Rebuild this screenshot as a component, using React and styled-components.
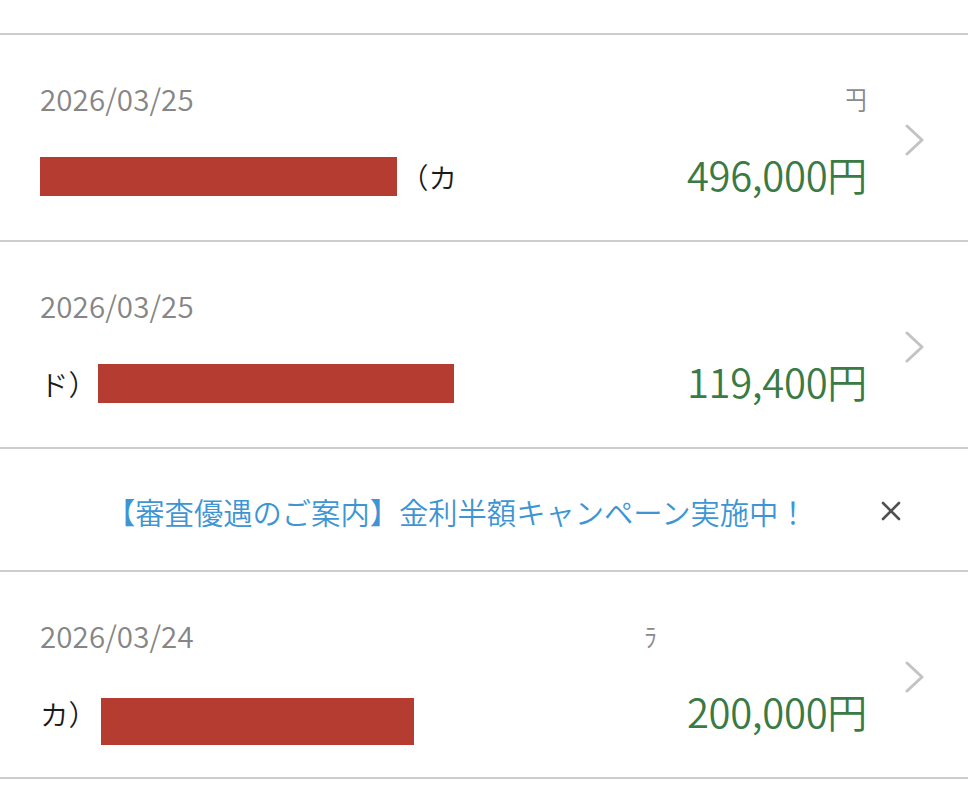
import React from 'react';
import styled, { createGlobalStyle } from 'styled-components';

const Global = createGlobalStyle`
  html, body {
    margin: 0;
    padding: 0;
    background: #fff;
  }
  body {
    font-family: "Noto Sans CJK JP", "Noto Sans", sans-serif;
    font-weight: 350;
    -webkit-font-smoothing: antialiased;
  }
`;

const Page = styled.div`
  width: 968px;
  padding-top: 33px;
`;

const List = styled.div`
  border-top: 2px solid #cdcdcd;
`;

const Row = styled.div`
  box-sizing: border-box;
  height: 207px;
  display: flex;
  align-items: center;
  padding: 0 43px 0 40px;
  border-bottom: 2px solid #cdcdcd;
`;

const Body = styled.div`
  flex: 1;
  align-self: stretch;
  padding-top: 45px;
  display: flex;
  flex-direction: column;
`;

const DateLine = styled.div`
  height: 36px;
  display: flex;
  align-items: center;
  justify-content: space-between;
`;

const DateText = styled.span`
  font-size: 29.5px;
  color: #868686;
  letter-spacing: 0.1px;
`;

const Ghost = styled.span`
  font-size: 26px;
  color: #8a8a8a;
  margin-right: ${(p) => p.$offset || 0}px;
  clip-path: inset(0 0 0 ${(p) => p.$cut || 0}%);
`;

const NameLine = styled.div`
  margin-top: 35px;
  height: 50px;
  display: flex;
  align-items: center;
  justify-content: space-between;
`;

const Name = styled.div`
  display: flex;
  align-items: center;
  gap: ${(p) => p.$gap || 4}px;
  font-size: 28.5px;
  color: #1a1a1a;
`;

const Redact = styled.span`
  display: inline-block;
  width: ${(p) => p.$w}px;
  height: ${(p) => p.$h}px;
  background: #b53c30;
  transform: translateY(${(p) => p.$dy || 0}px);
`;

const Amount = styled.span`
  font-size: 40px;
  color: #3a7a45;
  letter-spacing: -0.3px;
  margin-top: -4px;
`;

const Chevron = styled.div`
  width: 20px;
  margin-left: 38px;
  display: flex;
  align-items: center;
  justify-content: center;
  padding-top: 4px;
`;

const Banner = styled.div`
  box-sizing: border-box;
  height: 123px;
  display: flex;
  align-items: center;
  padding: 3px 66px 0 106px;
  border-bottom: 2px solid #cdcdcd;
`;

const BannerText = styled.span`
  font-size: 29.3px;
  color: #3d95d4;
  white-space: nowrap;
`;

const Close = styled.button`
  margin-left: auto;
  width: 22px;
  height: 22px;
  padding: 0;
  border: 0;
  background: none;
  display: flex;
  align-items: center;
  justify-content: center;
`;

const ChevronIcon = () => (
  <svg width="20" height="32" viewBox="0 0 20 32">
    <polyline points="2,2 17,16 2,30" fill="none" stroke="#c3c3c3" strokeWidth="3" strokeLinecap="round" strokeLinejoin="round" />
  </svg>
);

const CloseIcon = () => (
  <svg width="20" height="20" viewBox="0 0 20 20">
    <path d="M2 2 L18 18 M18 2 L2 18" stroke="#505050" strokeWidth="2.6" strokeLinecap="round" />
  </svg>
);

const Item = ({ date, ghost, ghostOffset, ghostCut, name, amount }) => (
  <Row>
    <Body>
      <DateLine>
        <DateText>{date}</DateText>
        {ghost && (
          <Ghost $offset={ghostOffset} $cut={ghostCut}>
            {ghost}
          </Ghost>
        )}
      </DateLine>
      <NameLine>
        {name}
        <Amount>{amount}</Amount>
      </NameLine>
    </Body>
    <Chevron>
      <ChevronIcon />
    </Chevron>
  </Row>
);

export default function App() {
  return (
    <Page>
      <Global />
      <List>
        <Item
          date="2026/03/25"
          ghost="円"
          ghostCut={22}
          name={
            <Name $gap={3}>
              <Redact $w={357} $h={39} />
              <span>（カ</span>
            </Name>
          }
          amount="496,000円"
        />
        <Item
          date="2026/03/25"
          name={
            <Name $gap={1}>
              <span>ド）</span>
              <Redact $w={356} $h={39} />
            </Name>
          }
          amount="119,400円"
        />
        <Banner>
          <BannerText>【審査優遇のご案内】金利半額キャンペーン実施中！</BannerText>
          <Close aria-label="閉じる">
            <CloseIcon />
          </Close>
        </Banner>
        <Item
          date="2026/03/24"
          ghost="ﾗ"
          ghostOffset={210}
          name={
            <Name $gap={4}>
              <span>カ）</span>
              <Redact $w={313} $h={47} $dy={8} />
            </Name>
          }
          amount="200,000円"
        />
      </List>
    </Page>
  );
}
